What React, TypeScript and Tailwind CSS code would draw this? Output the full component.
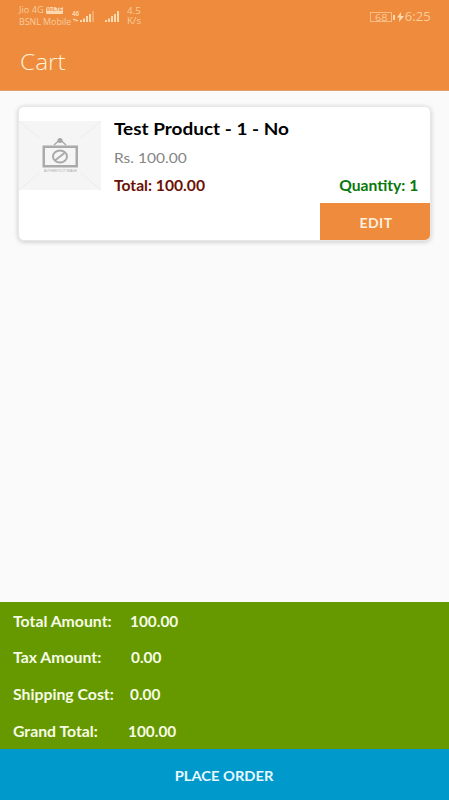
function Signal({ faded = false }: { faded?: boolean }) {
  return (
    <svg width="15" height="12" viewBox="0 0 15 12" fill="#fcd9ae">
      <rect x="0" y="9" width="2" height="2" />
      <rect x="3" y="7.5" width="2" height="3.5" />
      <rect x="6" y="5" width="2" height="6" />
      <rect x="9" y="3" width="2" height="8" />
      <rect x="12" y="0" width="2" height="11" opacity={faded ? 0.4 : 1} />
    </svg>
  );
}

function StatusBar() {
  return (
    <div className="flex h-[32px] items-start text-[#fbcd9d]">
      <div className="ml-[19px] mt-[4px] w-[53px] text-[8.500px] whitespace-nowrap">
        <div className="flex h-[12px] items-center leading-[12px]">
          <span className="inline-block w-[27px] origin-left scale-x-[1.08]">Jio 4G</span>
          <span className="flex h-[7px] w-[17px] items-center justify-center rounded-[1px] bg-[#fcd9ae] font-['Liberation_Sans',sans-serif] text-[5.500px] font-bold leading-none text-[#ee8b3d]">
            VoLTE
          </span>
        </div>
        <div className="w-max origin-left scale-x-[1.04] leading-[12px]">BSNL Mobile</div>
      </div>
      <div className="mt-[10px] w-[8px] text-[#fcd9ae]">
        <div className="font-['Liberation_Sans',sans-serif] text-[6.500px] font-bold leading-[8px]">46</div>
        <svg width="7" height="4" viewBox="0 0 7 4" fill="none" stroke="currentColor">
          <path d="M1 2 2 .7 3 2v1.500M4 1v1l1 1.200L6 2" />
        </svg>
      </div>
      <div className="mt-[11px] w-[25px]">
        <Signal faded />
      </div>
      <div className="mt-[11px] w-[21px]">
        <Signal />
      </div>
      <div className="mt-[6px] w-[16px] text-center text-[8.500px] leading-[10px]">
        <div className="h-[10px] scale-x-[1.15]">4.5</div>
        <div className="h-[10px] scale-x-[1.15]">K/s</div>
      </div>
      <div className="ml-auto mr-[18px] mt-[9px] flex h-[16px] items-center">
        <span className="flex h-[10px] w-[22px] items-center justify-center border border-[#f8bd86] text-[9px] leading-none">
          <span className="scale-x-[1.2]">68</span>
        </span>
        <span className="ml-[1px] h-[5px] w-[2px] bg-[#fcd9ae]" />
        <svg className="ml-[2px]" width="7" height="10" viewBox="0 0 7 10" fill="#fcd9ae">
          <path d="M4 0 0 5.5h2.5L2 10l5-6H4z" />
        </svg>
        <span className="ml-[2px] origin-right scale-x-[1.05] text-[12.5px] leading-none">6:25</span>
      </div>
    </div>
  );
}

function ProductImage() {
  return (
    <svg width="82" height="69" viewBox="0 0 82 69" className="block">
      <rect width="82" height="69" fill="#f5f5f5" />
      <path d="M0 0 82 69M82 0 0 69" stroke="#ececec" strokeWidth="1" />
      <rect x="20" y="14" width="42" height="40" fill="#f5f5f5" />
      <path d="M35 24 41 18.500 47 24" fill="none" stroke="#aaa" strokeWidth="1.500" />
      <circle cx="41" cy="19.500" r="2.500" fill="#a6a6a6" />
      <rect x="24.750" y="25.750" width="33" height="19.500" fill="#f5f5f5" stroke="#aaa" strokeWidth="2.500" />
      <ellipse cx="41" cy="35.500" rx="7" ry="6" fill="none" stroke="#aaa" strokeWidth="2" />
      <path d="m36.500 39 9-7" stroke="#aaa" strokeWidth="2" />
      <text x="25" y="51" fontSize="3.200" textLength="33" fontFamily="Liberation Sans, sans-serif" fill="#aaa">AUTHENTICIT IMAGE</text>
    </svg>
  );
}

function SummaryRow({ label, value, labelWidth }: { label: string; value: string; labelWidth: string }) {
  return (
    <div className="flex h-[36.750px] items-center text-[14.500px]">
      <div className={labelWidth}>
        <span className="inline-block origin-left scale-x-[1.09] whitespace-nowrap">{label}</span>
      </div>
      <span className="inline-block origin-left scale-x-[1.06]">{value}</span>
    </div>
  );
}

export default function App() {
  return (
    <main className="flex h-[800px] w-[449px] flex-col overflow-hidden bg-[#fafafa] font-['Lato',sans-serif]">
      <header className="h-[91px] shrink-0 border-b border-[#e1a26f] bg-[#ee8b3d] font-['Open_Sans',sans-serif]">
        <StatusBar />
        <h1 className="ml-[20px] mt-[13px] w-max origin-left scale-x-[1.11] text-[22px] font-light leading-[32px] text-[#fff0d8]">Cart</h1>
      </header>

      <section className="ml-[18px] mt-[15px] flex h-[135px] w-[413px] shrink-0 flex-col overflow-hidden rounded-[6px] border border-[#e8e8e8] bg-white shadow-[0_1px_5px_rgba(0,0,0,0.2)]">
        <div className="flex h-[97px] pt-[14px]">
          <ProductImage />
          <div className="ml-[13px] flex-1 pr-[12px]">
            <h2 className="-mt-px w-max origin-left scale-x-[1.115] text-[17px] font-bold leading-[17px] text-black">Test Product - 1 - No</h2>
            <p className="mt-[13px] w-max origin-left scale-x-[1.11] text-[14px] leading-[16px] text-[#858585]">Rs. 100.00</p>
            <div className="mt-[11px] flex justify-between text-[14.500px] font-bold leading-[17px]">
              <span className="inline-block origin-left scale-x-[1.08] text-[#6b1005]">Total: 100.00</span>
              <span className="inline-block origin-right scale-x-[1.08] text-[#08780c]">Quantity: 1</span>
            </div>
          </div>
        </div>
        <button className="ml-auto h-[37px] w-[110px] bg-[#ee8b3d] pl-[2px] pt-[1px] text-[14px] font-bold tracking-[0.5px] text-[#fff0dc]">EDIT</button>
      </section>

      <section className="mt-auto h-[147px] shrink-0 bg-[#669900] pl-[13px] pt-[1px] font-bold text-[#f6fce6]">
        <SummaryRow label="Total Amount:" value="100.00" labelWidth="w-[116.500px]" />
        <SummaryRow label="Tax Amount:" value="0.00" labelWidth="w-[118px]" />
        <SummaryRow label="Shipping Cost:" value="0.00" labelWidth="w-[117px]" />
        <SummaryRow label="Grand Total:" value="100.00" labelWidth="w-[115px]" />
      </section>
      <button className="h-[51px] shrink-0 bg-[#0099cc] pt-[1px] text-[14px] font-bold text-[#e8faff]">
        <span className="inline-block scale-x-[1.05]">PLACE ORDER</span>
      </button>
    </main>
  );
}
